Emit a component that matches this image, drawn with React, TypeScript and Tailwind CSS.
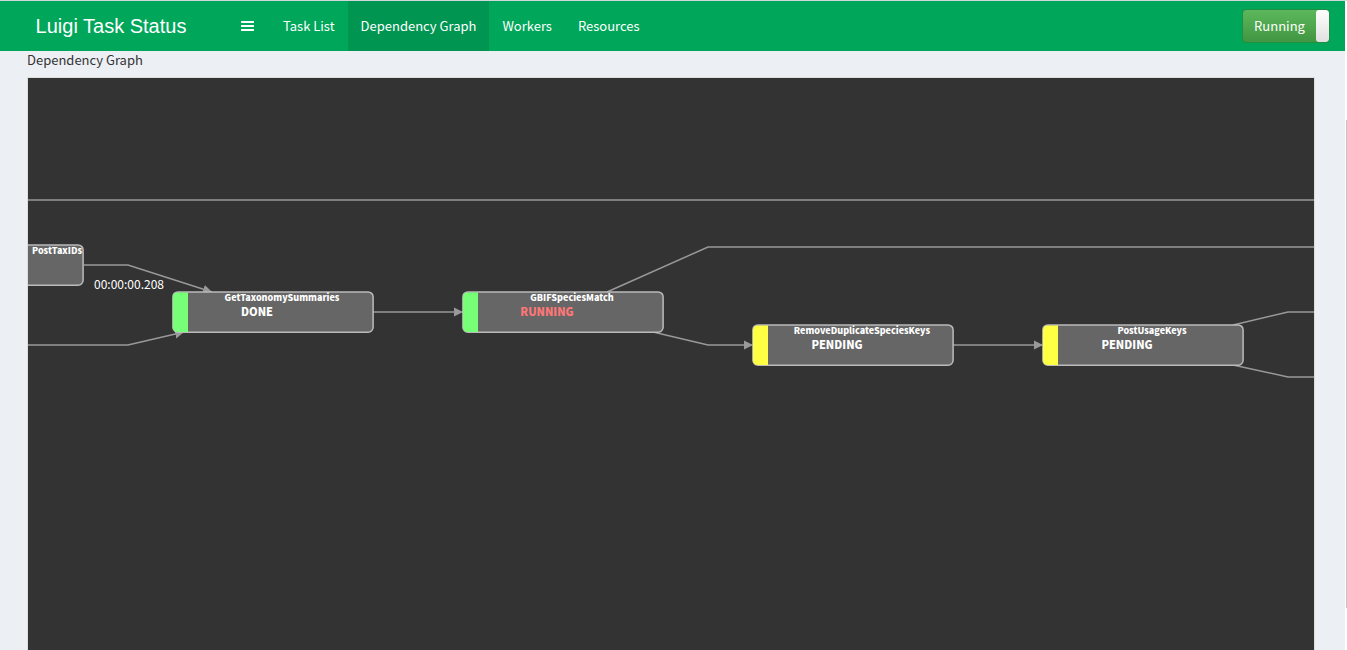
import { useState } from "react";

type TaskNode = {
  name: string;
  status?: "DONE" | "RUNNING" | "PENDING";
  left: number;
  top: number;
  width: number;
};

const nodes: TaskNode[] = [
  { name: "PostTaxIDs", left: -81, top: 166, width: 137 },
  { name: "GetTaxonomySummaries", status: "DONE", left: 144, top: 213, width: 202 },
  { name: "GBIFSpeciesMatch", status: "RUNNING", left: 434, top: 213, width: 202 },
  { name: "RemoveDuplicateSpeciesKeys", status: "PENDING", left: 724, top: 246, width: 202 },
  { name: "PostUsageKeys", status: "PENDING", left: 1014, top: 246, width: 202 },
];

const edges = [
  { points: "0,122 4000,122", arrow: false },
  { points: "56,187 100,187 184,214", arrow: true },
  { points: "0,267 100,267 156,254", arrow: true },
  { points: "345,234 435,234", arrow: true },
  { points: "579,214 680,169 4000,169", arrow: false },
  { points: "625,254 680,267 725,267", arrow: true },
  { points: "925,267 1015,267", arrow: true },
  { points: "1205,247 1260,234 4000,234", arrow: false },
  { points: "1205,287 1260,299 4000,299", arrow: false },
];

const tabs = ["Task List", "Dependency Graph", "Workers", "Resources"];

function Node({ node }: { node: TaskNode }) {
  const strip = node.status === "PENDING" ? "fill-[#ffff44]" : "fill-[#77ff77]";
  const statusColor = node.status === "RUNNING" ? "text-[#ff7777]" : "text-white";
  return (
    <div
      className="absolute h-[43px] font-black"
      style={{ left: node.left, top: node.top, width: node.width }}
    >
      <svg className="absolute inset-0 size-full" aria-hidden="true">
        <rect x="0.9" y="0.9" width={node.width - 1.8} height="40.4" rx="5" fill="#666" stroke="#bbb" strokeWidth="1.5" />
        <path d="M16 1.5 H6 Q1 1.5 1 6.5 V36 Q1 41 6 41 H16 Z" className={strip} />
      </svg>
      <div className="relative flex flex-col pl-[16px] whitespace-nowrap text-white">
        <span className="flex w-[188px] justify-center text-[9px] leading-[14px]">{node.name}</span>
        {node.status && (
          <span className={`flex w-[138px] justify-center text-[11px] leading-[12px] ${statusColor}`}>
            {node.status}
          </span>
        )}
      </div>
    </div>
  );
}

export default function App() {
  const [active, setActive] = useState("Dependency Graph");
  const [running, setRunning] = useState(true);

  return (
    <div className="flex h-screen border-t border-[#d2d6de] bg-white font-['Noto_Sans_CJK_SC',sans-serif] text-[13px] text-[#333]">
      <div className="flex min-w-0 flex-1 flex-col bg-[#ecf0f5]">
        <header className="flex h-[50px] shrink-0 items-stretch bg-[#00a65a] text-white">
          <a
            href="#"
            className="flex w-[222px] items-center justify-center font-['Liberation_Sans',Arial,sans-serif] text-[20px]"
          >
            Luigi Task Status
          </a>
          <nav className="flex items-stretch">
            <button aria-label="Toggle navigation" className="flex w-[48px] items-center pl-[19px]">
              <svg width="13" height="12" viewBox="0 0 13 12" fill="currentColor" aria-hidden="true">
                <rect y="1" width="13" height="2" rx="0.5" />
                <rect y="5" width="13" height="2" rx="0.5" />
                <rect y="9" width="13" height="2" rx="0.5" />
              </svg>
            </button>
            {tabs.map((tab) => (
              <a
                key={tab}
                href="#"
                onClick={() => setActive(tab)}
                className={`flex items-center px-[13px] whitespace-nowrap ${active === tab ? "bg-[#009551]" : ""}`}
              >
                {tab}
              </a>
            ))}
          </nav>
          <button
            role="switch"
            aria-checked={running}
            onClick={() => setRunning(!running)}
            className="mr-[15px] ml-auto flex h-[34px] w-[88px] self-center overflow-hidden rounded-[4px] border border-[#1f8f42] bg-linear-to-b from-[#5cb85c] to-[#419641]"
          >
            <span className="flex flex-1 items-center justify-center self-stretch">Running</span>
            <span className="w-[13px] self-stretch rounded-[3px] bg-linear-to-b from-white to-[#e0e0e0]" />
          </button>
        </header>
        <main className="flex min-h-0 flex-1 flex-col pr-[30px] pl-[27px]">
          <h1 className="h-[26px] leading-[18px]">Dependency Graph</h1>
          <section
            aria-label="Dependency graph"
            className="relative flex-1 overflow-hidden border border-b-0 border-[#ddd] bg-[#333]"
          >
            <svg className="absolute inset-0 size-full" aria-hidden="true">
              <defs>
                <marker
                  id="arrow"
                  markerWidth="9"
                  markerHeight="10"
                  refX="9"
                  refY="5"
                  orient="auto"
                  markerUnits="userSpaceOnUse"
                >
                  <path d="M0 0.5 L9 5 L0 9.5 Z" fill="#999" />
                </marker>
              </defs>
              {edges.map((edge) => (
                <polyline
                  key={edge.points}
                  points={edge.points}
                  fill="none"
                  stroke="#999"
                  strokeWidth="1.5"
                  markerEnd={edge.arrow ? "url(#arrow)" : undefined}
                />
              ))}
            </svg>
            {nodes.map((node) => (
              <Node key={node.name} node={node} />
            ))}
            <span className="absolute top-[198px] left-[66px] text-[12px] leading-[16px] text-white">
              00:00:00.208
            </span>
          </section>
        </main>
      </div>
      <div className="flex w-[2px] flex-col pt-[119px] pb-[42px] pl-px">
        <div className="flex-1 bg-[#c1c1c1]" />
      </div>
    </div>
  );
}
